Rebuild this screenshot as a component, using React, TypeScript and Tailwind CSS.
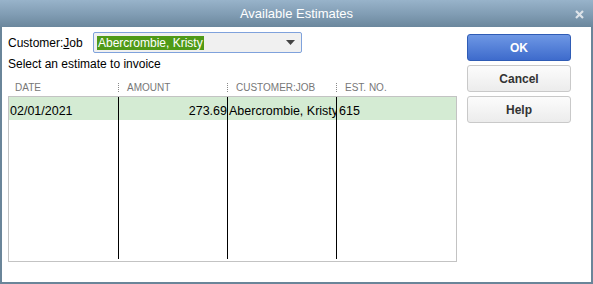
import React from "react"

const font = { fontFamily: '"Liberation Sans", Arial, sans-serif' }

function HeaderCell({ label, sep }: { label: string; sep?: boolean }) {
  return (
    <div className="flex items-center h-full">
      {sep && <div className="h-[9px] border-l border-dotted border-[#8a8a8a] ml-[-1px]" />}
      <span className={sep ? "pl-[8px]" : "pl-[6px]"}>{label}</span>
    </div>
  )
}

function DialogButton({ label, primary }: { label: string; primary?: boolean }) {
  return (
    <button
      className={
        primary
          ? "h-[27px] w-[104px] rounded-[3px] border border-[#2f5cb5] bg-gradient-to-b from-[#6e97e4] to-[#3e6bcc] text-white font-bold text-[12px]"
          : "h-[27px] w-[104px] rounded-[3px] border border-[#c9c9c9] bg-gradient-to-b from-[#fcfcfc] to-[#ececec] text-[#333] font-bold text-[12px]"
      }
    >
      {label}
    </button>
  )
}

export default function App() {
  return (
    <div className="w-[593px] h-[284px] flex flex-col" style={font}>
      {/* Title bar */}
      <div className="relative h-[27px] flex items-center justify-center bg-gradient-to-b from-[#98b3ca] via-[#829eb5] to-[#6b879d]">
        <span className="text-white text-[13px]">Available Estimates</span>
        <svg className="absolute right-[9px] top-[10px]" width="9" height="9" viewBox="0 0 9 9">
          <path d="M1 1 L8 8 M8 1 L1 8" stroke="#dde3e9" strokeWidth="2.2" />
        </svg>
      </div>

      {/* Body */}
      <div className="flex-1 flex bg-white border-x-2 border-b-2 border-[#6a8599]">
        <div className="w-[455px] pl-[6px] flex flex-col">
          <div className="flex items-center mt-[5px] h-[21px] text-[12px] text-black">
            <span className="w-[85px]">
              Customer:<span className="underline">J</span>ob
            </span>
            <div className="w-[209px] h-[21px] rounded-[2px] border border-[#7fa2dc] bg-[#f0f0f0] flex items-center pl-[3px] pr-[6px]">
              <span className="bg-[#4f9a17] text-white px-[1px] leading-[14px]">Abercrombie, Kristy</span>
              <div className="flex-1" />
              <svg width="9" height="5" viewBox="0 0 9 5">
                <path d="M0 0 L9 0 L4.5 5 Z" fill="#444" />
              </svg>
            </div>
          </div>
          <div className="mt-[4px] text-[12px] text-black leading-[14px]">Select an estimate to invoice</div>

          {/* Table header */}
          <div className="mt-[7px] h-[18px] grid grid-cols-[110px_109px_109px_1fr] text-[10px] text-[#777] pl-[1px]">
            <HeaderCell label="DATE" />
            <HeaderCell label="AMOUNT" sep />
            <HeaderCell label="CUSTOMER:JOB" sep />
            <HeaderCell label="EST. NO." sep />
          </div>

          {/* Table body */}
          <div className="h-[166px] border border-[#c3c3c3] pb-[2px] flex flex-col">
            <div className="relative flex-1 grid grid-cols-[110px_109px_109px_1fr]">
              <div className="border-r border-black" />
              <div className="border-r border-black" />
              <div className="border-r border-black" />
              <div />
              <div className="absolute left-0 right-0 top-0 h-[23px] grid grid-cols-[110px_109px_109px_1fr] bg-[#d4ebd3] text-[12.5px] text-black">
                <div className="pl-[1px] pt-[5px] border-r border-black">02/01/2021</div>
                <div className="text-right pt-[5px] border-r border-black">273.69</div>
                <div className="pl-[1px] pt-[5px] border-r border-black whitespace-nowrap overflow-hidden">Abercrombie, Kristy</div>
                <div className="pl-[2px] pt-[5px]">615</div>
              </div>
            </div>
          </div>
        </div>

        {/* Buttons */}
        <div className="ml-[10px] mt-[7px] flex flex-col gap-[4px]">
          <DialogButton label="OK" primary />
          <DialogButton label="Cancel" />
          <DialogButton label="Help" />
        </div>
      </div>
    </div>
  )
}
